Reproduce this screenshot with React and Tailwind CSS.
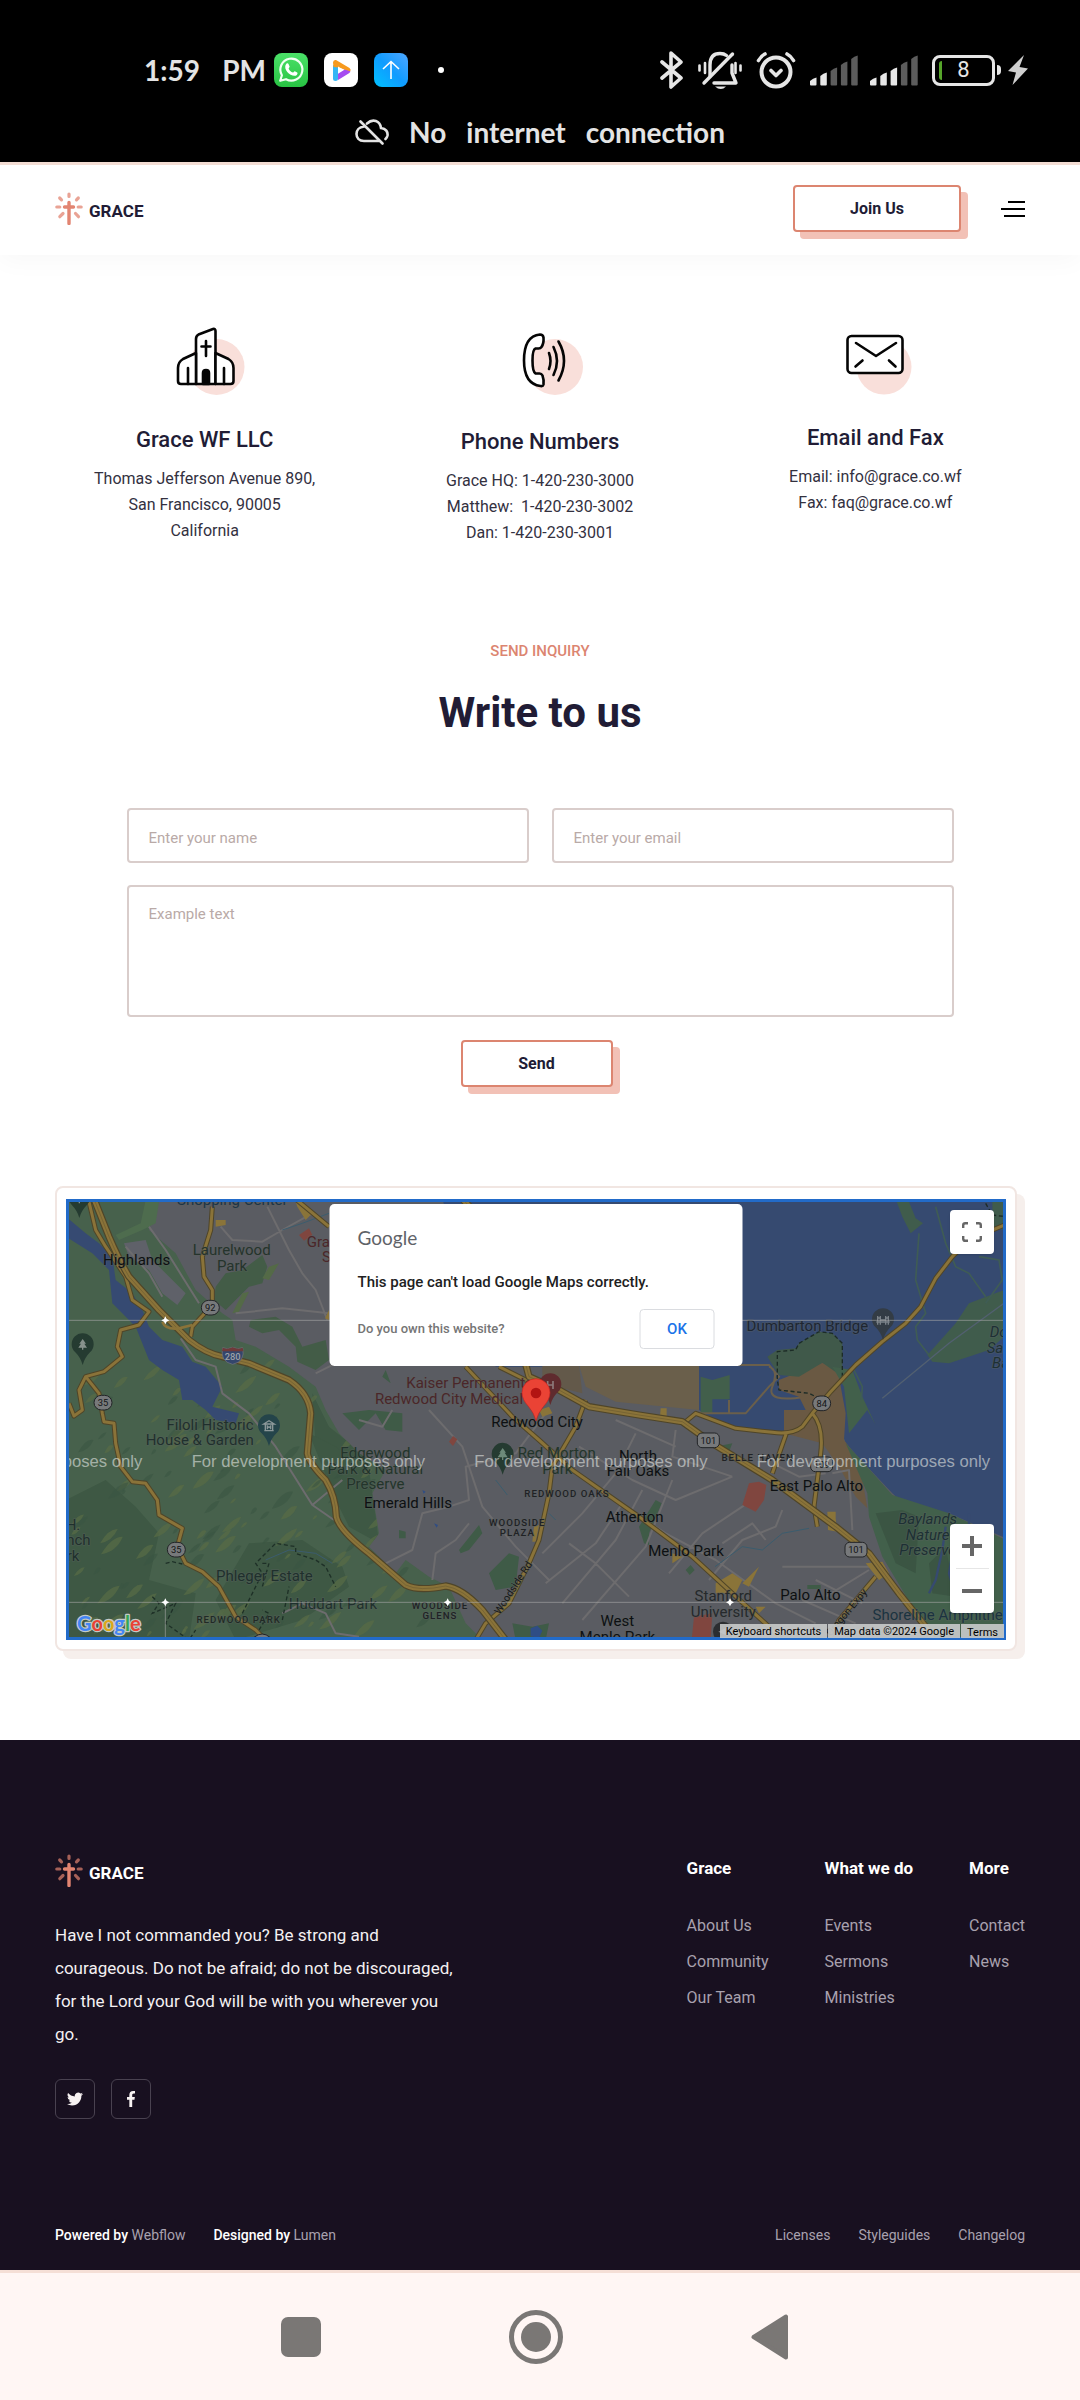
import React from "react";

const ROBOTO = "font-[Roboto,'Liberation_Sans',sans-serif]";

/* ---------- status bar ---------- */

function WhatsAppIcon() {
  return (
    <svg className="h-[34px] w-[34px]" viewBox="0 0 34 34" aria-label="WhatsApp">
      <defs>
        <linearGradient id="wa" x1="0" y1="0" x2="0" y2="1">
          <stop offset="0" stopColor="#4be168" />
          <stop offset="1" stopColor="#28c343" />
        </linearGradient>
      </defs>
      <rect width="34" height="34" rx="8" fill="url(#wa)" />
      <path d="M6.2 27.8l1.7-5.6A11 11 0 1 1 12 26.2z" fill="none" stroke="#f1fff3" strokeWidth="2.2" strokeLinejoin="round" />
      <path d="M12.6 10.6c.7-.5 1.5-.4 1.9.4l1.1 2.4c.2.5-.9 1.7-1 2 .8 2 2.300 3.400 4.300 4.200.4-.1 1.400-1.600 1.900-1.400l2.400 1.200c.6.4.3 1.800-.4 2.500-1.300 1.300-3.600 1.200-6.200-.2-2.500-1.400-4.600-3.800-5.200-6.300-.4-2 .1-3.800 1.200-4.800z" fill="#fff" />
    </svg>
  );
}

function PlayIcon() {
  return (
    <svg className="h-[34px] w-[34px]" viewBox="0 0 34 34" aria-label="Player">
      <rect width="34" height="34" rx="8" fill="#fff" />
      <path d="M9 12v13.500q0 2.500 2.500 2.500t2.500-2.500V14z" fill="#35b6f5" />
      <path d="M14 27.500V20l7-4 5 1.500q1 1.500-1 2.700L14 27z" fill="#a64cf0" />
      <path d="M9 9.500Q9.200 6.500 12 7l13.500 8q1.800 1.300.8 3.300L14 14.500 9.500 14z" fill="#f79a1e" />
      <path d="M14 13.500l6 3.600-6 3.600z" fill="#fff" />
    </svg>
  );
}

function UploadIcon() {
  return (
    <svg className="h-[34px] w-[34px]" viewBox="0 0 34 34" aria-label="Upload">
      <defs>
        <linearGradient id="up" x1="0" y1="1" x2="1" y2="0">
          <stop offset="0" stopColor="#00c2ff" />
          <stop offset=".5" stopColor="#109cff" />
          <stop offset="1" stopColor="#4fa6ff" />
        </linearGradient>
      </defs>
      <rect width="34" height="34" rx="8" fill="url(#up)" />
      <path d="M17 26V9M9 16l8-7.500 8 7.500" fill="none" stroke="#fff" strokeWidth="1.600" />
    </svg>
  );
}

function Signal({ strength }) {
  const tops = [22, 17, 12, 6, 0];
  return (
    <svg className="h-[31px] w-12" viewBox="0 0 48 31" aria-label={`Signal ${strength} of 5`}>
      {tops.map((t, i) => (
        <path
          key={t}
          d={`M${i * 10.300} ${t + 4}q3-3 6.500-3.500V29.500q0 1-1 1h-4.500q-1 0-1-1z`}
          fill={i < strength ? "#e6e6e6" : "#5c5c5c"}
        />
      ))}
    </svg>
  );
}

function StatusIcons() {
  return (
    <div className="flex items-center gap-3.5">
      <svg className="h-[38px] w-6" viewBox="0 0 24 38" fill="none" stroke="#e6e6e6" strokeWidth="3.600" strokeLinejoin="round" strokeLinecap="round" aria-label="Bluetooth">
        <path d="M2 11l19 16-10 9V2l10 9L2 27" />
      </svg>
      <svg className="h-[39px] w-11" viewBox="0 0 44 39" fill="none" stroke="#e6e6e6" strokeWidth="3.400" strokeLinecap="round" aria-label="Muted">
        <path d="M12 25V14C12 6 16 2.500 22 2.500c3 0 5 .8 6.500 2" />
        <path d="M34 14v8l4 10H16" strokeLinejoin="round" />
        <path d="M34.500 3L6 32" />
        <path d="M1.500 14.500v5M7 12v10M37.500 12v10M42.500 14.500v5" strokeWidth="2.600" />
        <path d="M17 35.500h11q-5 5-11 0z" fill="#e6e6e6" stroke="none" />
      </svg>
      <svg className="h-[38px] w-10" viewBox="0 0 40 38" fill="none" stroke="#e6e6e6" strokeWidth="4" strokeLinecap="round" strokeLinejoin="round" aria-label="Alarm">
        <circle cx="20" cy="21" r="14.500" />
        <path d="M2.500 9.500Q5 5 9 3M37.500 9.500Q35 5 31 3M15 19.500l5 5 5-5" strokeWidth="3.600" />
      </svg>
      <div className="flex gap-3">
        <Signal strength={2} />
        <Signal strength={3} />
      </div>
      <div className="flex items-center gap-[7px]">
        <div className="flex items-center gap-0.5" aria-label="Battery 8 percent">
          <div className="relative flex h-[31px] w-[63px] items-center justify-center rounded-lg border-[3px] border-[#e6e6e6]">
            <span className="absolute left-1 h-[19px] w-[3px] rounded-l bg-[#56a52a]" />
            <span className={`${ROBOTO} text-[22px] leading-6 text-[#e6e6e6]`}>8</span>
          </div>
          <span className="h-2.5 w-1 rounded-r bg-[#e6e6e6]" />
        </div>
        <svg className="h-[30px] w-5" viewBox="0 0 20 30" aria-label="Charging">
          <path d="M16 0L0 16l8 1.500L4.500 30 20 13.500l-8.500-1.500z" fill="#cfcfcf" />
        </svg>
      </div>
    </div>
  );
}

function StatusBar() {
  return (
    <div className="bg-black pt-[50px] pb-3 font-[Lato,sans-serif] text-[#e4e4e4]">
      <div className="flex h-10 items-center justify-between pr-[52px] pl-36">
        <div className="flex items-center gap-4">
          <div className="-mr-2 flex w-[122px] justify-between text-[28px] leading-10 font-bold">
            <span>1:59</span>
            <span>PM</span>
          </div>
          <WhatsAppIcon />
          <PlayIcon />
          <UploadIcon />
          <span className="ml-3.5 h-1.5 w-1.5 rounded-full bg-white" />
        </div>
        <StatusIcons />
      </div>
      <div className="mt-6 flex h-9 items-center justify-center gap-5 text-[28px] leading-9 font-bold">
        <svg className="h-[26px] w-[34px]" viewBox="0 0 34 26" fill="none" stroke="#e4e4e4" strokeWidth="2.600" strokeLinecap="round" aria-hidden="true">
          <path d="M9 7.500C4 8 1.500 11.500 1.500 15S4 22 9 22h15M12 4.500C18-1 25 2 26 9c5 .5 7 4 6.500 7.500q-.4 2-2 3.500M5.500 2.500l22 22" />
        </svg>
        <span>No</span>
        <span>internet</span>
        <span>connection</span>
      </div>
    </div>
  );
}

/* ---------- site header ---------- */

function Logo({ textClass, rayOpacity }) {
  return (
    <a href="#home" className="flex items-center gap-1.5" aria-label="Grace home">
      <svg className="h-[33px] w-7" viewBox="0 0 28 33" fill="none" stroke="#e28471" strokeLinecap="round">
        <path d="M14 10.500V31.500M9.500 15h9" strokeWidth="3.400" />
        <path
          d="M14 2v2.500M4.700 6l1.800 1.800M23.300 6l-1.800 1.800M1.800 15h3M23.200 15h3M8 21.500l-3.200 3.200M20.500 21.500l3 3.200"
          strokeWidth="3.200"
          opacity={rayOpacity}
        />
      </svg>
      <span className={`mt-1 text-[17px] leading-5 font-bold ${textClass}`}>GRACE</span>
    </a>
  );
}

function Header() {
  return (
    <header className="border-t-[3px] border-[#f3ddd4] bg-white shadow-[0_6px_24px_rgba(40,20,20,0.03)]">
      <div className="flex items-center justify-between px-[55px] pt-5 pb-[23px]">
        <Logo textClass="text-[#211c35]" rayOpacity="0.75" />
        <div className="flex items-center gap-10">
          <a
            href="#join"
            className="flex h-[47px] w-[168px] items-center justify-center rounded border-2 border-[#dc8570] bg-white text-base font-bold text-[#211c35] shadow-[7px_7px_0_#f2c1b6]"
          >
            Join Us
          </a>
          <button type="button" aria-label="Menu" className="flex h-[47px] w-6 flex-col items-end justify-center gap-[5px]">
            <span className="h-0.5 w-[17px] bg-black" />
            <span className="h-0.5 w-6 bg-black" />
            <span className="h-0.5 w-[21px] bg-black" />
          </button>
        </div>
      </div>
    </header>
  );
}

/* ---------- contact cards ---------- */

function ChurchIcon() {
  return (
    <svg className="h-[72px] w-[100px]" viewBox="0 0 100 72" fill="none" stroke="#050505" strokeWidth="2.600" strokeLinecap="round" strokeLinejoin="round">
      <circle cx="61.500" cy="42" r="28" fill="#f9dfda" stroke="none" />
      <path d="M41 59V14q0-3 2.500-4.500L58 4q2.500-.5 2.500 2V59z" fill="#fff" />
      <path d="M41 28l-13 6q-5 3-5 9V56q0 3 3 3h15zM60.500 28l13 6q5 3 5 9V56q0 3-3 3h-15z" fill="#fff" />
      <path d="M51 16v15M46.500 21.500h9M33 43v16M69 43v16" />
      <path d="M48 59V48q0-3 3-3t3 3v11z" fill="#050505" />
    </svg>
  );
}

function PhoneIcon() {
  return (
    <svg className="h-[74px] w-[100px]" viewBox="0 0 100 74" fill="none" stroke="#050505" strokeWidth="2.600" strokeLinecap="round" strokeLinejoin="round">
      <circle cx="65" cy="42" r="28" fill="#f9dfda" stroke="none" />
      <path
        d="M50 9.500q3 0 3.500 3 .5 6-2 9.500-1 1.500-3 1.500h-3q-3 1-3 12t3 13h4q2 0 3 2 1.500 4 1 9-.5 2-3 1.500Q34 59 34 35.500 34 11 50 9.500z"
        fill="#fff"
      />
      <path d="M59 28q3 8 0 16M63.500 22q7 14 0 28M68.500 16.500q11 19 0 39" />
    </svg>
  );
}

function MailIcon() {
  return (
    <svg className="h-[70px] w-[100px]" viewBox="0 0 100 70" fill="none" stroke="#050505" strokeWidth="2.600" strokeLinecap="round" strokeLinejoin="round">
      <circle cx="59" cy="42" r="27.500" fill="#f9dfda" stroke="none" />
      <rect x="22.500" y="11" width="55" height="37" rx="4" fill="#fff" />
      <path d="M31 18l20 13 20-13M37.500 35.500l-7 6M64 35.500l6.500 6" />
    </svg>
  );
}

const contacts = [
  { title: "Grace WF LLC", Icon: ChurchIcon, lines: ["Thomas Jefferson Avenue 890,", "San Francisco, 90005", "California"] },
  { title: "Phone Numbers", Icon: PhoneIcon, lines: ["Grace HQ: 1-420-230-3000", "Matthew:\u00a0 1-420-230-3002", "Dan: 1-420-230-3001"] },
  { title: "Email and Fax", Icon: MailIcon, lines: ["Email: info@grace.co.wf", "Fax: faq@grace.co.wf"] },
];

function Contacts() {
  return (
    <section className="grid grid-cols-3 gap-9 px-[55px] pt-[70px]">
      {contacts.map(({ title, Icon, lines }) => (
        <div key={title} className="flex flex-col items-center text-center">
          <Icon />
          <h3 className="mt-[29px] text-[22px] leading-7 font-medium text-[#211c35]">{title}</h3>
          <p className="mt-3 text-base leading-[26px] text-[#33313f]">
            {lines.map((l) => (
              <span key={l} className="block">{l}</span>
            ))}
          </p>
        </div>
      ))}
    </section>
  );
}

/* ---------- inquiry form ---------- */

const fieldClass =
  "block w-full rounded border-2 border-[#d9cdcb] bg-white px-5 text-[15px] leading-6 text-[#211c35] placeholder:text-[#b9aaa7] outline-none";

function Inquiry() {
  return (
    <section className="px-[55px] pt-[95px] text-center">
      <p className="text-[15px] leading-5 font-medium text-[#dc8570]">SEND INQUIRY</p>
      <h2 className="mt-7 text-[42px] leading-[48px] font-bold text-[#211c35]">Write to us</h2>
      <form className="mx-auto mt-[71px] max-w-[827px]" onSubmit={(e) => e.preventDefault()}>
        <div className="grid grid-cols-2 gap-[23px]">
          <input className={`${fieldClass} h-[55px] pt-1`} aria-label="Name" placeholder="Enter your name" />
          <input type="email" className={`${fieldClass} h-[55px] pt-1`} aria-label="Email" placeholder="Enter your email" />
        </div>
        <textarea className={`${fieldClass} mt-[22px] h-[132px] resize-none pt-[15px]`} aria-label="Message" placeholder="Example text" />
        <button
          type="submit"
          className="mt-[23px] mr-[7px] h-[47px] w-[152px] rounded border-2 border-[#dc8570] bg-white text-base font-bold text-[#211c35] shadow-[7px_7px_0_#f2c1b6]"
        >
          Send
        </button>
      </form>
    </section>
  );
}

/* ---------- map ---------- */

const GREEN =
  "M51 57H330L300 150 380 220 440 330 520 400 550 420 560 480 620 500 720 560 800 620 830 690 870 760 930 820 1010 870 970 940 990 1060 960 1100 1040 1180 1070 1140 1140 1190 1200 1220 1250 1330 1300 1380H51z";

const hash = (n) => {
  const v = Math.sin(n * 127.1) * 43758.5453;
  return v - Math.floor(v);
};

const streaks = Array.from({ length: 170 }, (_, i) => {
  const x = 60 + hash(i + 1) * 1050;
  const y = 560 + hash(i + 301) * 820;
  const l = 14 + hash(i + 601) * 55;
  const w = 5 + hash(i + 901) * 13;
  const light = hash(i + 1201) > 0.45;
  return { x, y, l, w, light };
});

const majorRoads = [
  "M135 57L180 170Q210 240 240 290L330 390 420 480Q470 520 520 530L600 550 720 600Q780 640 785 700L775 820Q780 850 830 900 860 950 862 1010 870 1050 960 1120L1070 1215Q1110 1235 1190 1218 1240 1225 1300 1290L1370 1380",
  "M1240 57L1320 140 1440 590 1530 630 1620 680 1770 705 1900 725 1990 790 2170 900 2360 1040 2460 1120 2550 1240 2630 1340 2650 1380",
];
const midRoads = [
  "M490 80L485 150 460 230 465 290 490 330V375L430 440 425 470",
  "M118 57L140 150 170 200 230 290 250 360 300 395 270 435 215 450 205 500 220 530 165 575 110 590 90 630 100 690 75 708 60 670",
  "M110 590L150 640 160 700 165 725 195 730 200 790 215 860 250 905 290 910 325 960 330 1005 400 1045 385 1100 410 1150 460 1175 510 1220 560 1310 620 1350 650 1380",
  "M1250 560L1390 710 1470 780 1570 870 1770 1010 1930 1130 2050 1240 2160 1340 2200 1380",
  "M1350 560L1470 620M1610 660L1580 740 1510 860 1500 940 1470 1080 1440 1150 1380 1270 1310 1330 1280 1380",
  "M740 57L840 140",
  "M2871 133L2760 180 2710 230 2660 295 2615 380 2570 430 2500 485 2420 555 2345 635 2290 700 2260 740Q2230 765 2170 757L2060 745 1940 700 1910 725",
  "M2290 700Q2325 740 2315 820L2295 980 2305 1040M2212 760L2170 880M2480 1190L2370 1320 2340 1380",
];
const streets =
  "M655 80L720 210 760 280 800 330 835 420M515 140L550 180 640 185 700 150 790 100M300 140L350 210 400 290 450 370M560 400L700 385 840 400M230 200L300 280 340 350M395 475L440 540 500 560 520 640 600 700 680 800 790 975 855 1020M790 975L880 900M800 580L900 530M1140 690L1240 800 1300 980 1400 1100 1500 1200M1010 1150L1090 1110 1120 1000 1200 980 1260 960 1250 860 1400 820 1490 700M930 720L1000 740 1030 690M1480 1120L1600 1000 1700 880 1760 760M1490 1210L1640 1090 1720 970M1540 1270L1700 1080 1780 930M1600 1320L1790 1100 1870 900M1560 1090L1640 1150 1740 1250M1650 930L1850 1060 2000 1140 2180 1270 2300 1330M1590 800L1750 900 1880 960 2050 890M1860 1180L1960 1060 2080 980 2140 930M1980 1200L2080 1080 2180 1040 2200 990M2200 1160H2460M2330 1250L2460 1170M2300 1200L2440 1270M2020 1090L2110 1030 2150 1080M2350 880L2400 870 2410 1050M2260 1260L2420 1330M1880 750L1870 830 2050 890M2190 860L2250 890 2330 880M1700 720L1880 800M700 1300L760 1270 830 1300 860 1360 930 1370 M1150 1200L1160 1120 1220 1080 1260 1030";

const labels = [
  ["Highlands", 263, 255, 45, "#0d1012"],
  ["Laurelwood", 548, 225, 45, "#25342c"],
  ["Park", 549, 272, 45, "#25342c"],
  ["Shopping Center", 550, 75, 45, "#1d3546"],
  ["Gra", 808, 200, 45, "#4b2629"],
  ["S", 832, 246, 45, "#4b2629"],
  ["Kaiser Permanente", 1262, 624, 45, "#4b2629"],
  ["Redwood City Medical", 1200, 671, 45, "#4b2629"],
  ["Redwood City", 1464, 741, 45, "#0d1012"],
  ["Dumbarton Bridge", 2275, 453, 45, "#1d2632"],
  ["Filoli Historic", 483, 749, 45, "#1f302d"],
  ["House & Garden", 452, 795, 45, "#1f302d"],
  ["Edgewood", 979, 834, 45, "#23352b"],
  ["Park & Natural", 979, 881, 45, "#23352b"],
  ["Preserve", 979, 927, 45, "#23352b"],
  ["Emerald Hills", 1077, 985, 45, "#0d1012"],
  ["Red Morton", 1523, 834, 45, "#23352b"],
  ["Park", 1525, 881, 45, "#23352b"],
  ["North", 1767, 843, 45, "#0d1012"],
  ["Fair Oaks", 1767, 889, 45, "#0d1012"],
  ["REDWOOD OAKS", 1554, 951, 29, "#202225", 3],
  ["WOODSIDE", 1405, 1038, 29, "#202225", 3],
  ["PLAZA", 1405, 1068, 29, "#202225", 3],
  ["BELLE HAVEN", 2126, 842, 29, "#202225", 3],
  ["East Palo Alto", 2302, 932, 45, "#0d1012"],
  ["Atherton", 1757, 1025, 45, "#0d1012"],
  ["Menlo Park", 1911, 1127, 45, "#0d1012"],
  ["Palo Alto", 2284, 1261, 45, "#0d1012"],
  ["Stanford", 2023, 1264, 45, "#25292c"],
  ["University", 2023, 1311, 45, "#25292c"],
  ["West", 1705, 1337, 45, "#0d1012"],
  ["Menlo Park", 1705, 1385, 45, "#0d1012"],
  ["Phleger Estate", 646, 1203, 45, "#1f302d"],
  ["Huddart Park", 852, 1288, 45, "#1f302d"],
  ["REDWOOD PARK", 569, 1328, 29, "#202a25", 3],
  ["WOODSIDE", 1173, 1288, 29, "#202225", 3],
  ["GLENS", 1173, 1318, 29, "#202225", 3],
  ["H.", 72, 1050, 45, "#1f302d"],
  ["nch", 88, 1096, 45, "#1f302d"],
  ["rk", 72, 1142, 45, "#1f302d"],
  ["Shoreline Amphitheatre", 2705, 1319, 45, "#1a3340"],
];

const italics = [
  ["Don Edwards", 2950, 472],
  ["San Francisco", 2950, 518],
  ["Bay", 2865, 564],
  ["Baylands", 2636, 1033],
  ["Nature", 2636, 1080],
  ["Preserve", 2636, 1126],
];

function Pin({ x, y, fill, children }) {
  return (
    <g transform={`translate(${x} ${y})`}>
      <path d="M0 60Q-6 38-22 22A33 33 0 1 1 22 22Q6 38 0 60z" fill={fill} />
      {children}
    </g>
  );
}

function Shield({ x, y, n, wide }) {
  return (
    <g>
      <rect x={x - (wide ? 33 : 27)} y={y - 22} width={wide ? 66 : 54} height="44" rx={wide ? 14 : 22} fill="#77797b" stroke="#222427" strokeWidth="3" />
      <text x={x} y={y + 10} fontSize="28" textAnchor="middle" fill="#121416">{n}</text>
    </g>
  );
}

function MapDrawing() {
  return (
    <svg
      className="absolute inset-0 h-full w-full"
      viewBox="51 57 2820 1323"
      preserveAspectRatio="xMidYMid slice"
      fontFamily="Roboto, 'Liberation Sans', sans-serif"
      role="img"
      aria-label="Map of Redwood City"
    >
      <defs>
        <clipPath id="hills">
          <path d={GREEN} />
        </clipPath>
      </defs>
      <rect x="51" y="57" width="2820" height="1323" fill="#5a5c62" />
      <path d={GREEN} fill="#47614c" />
      <g clipPath="url(#hills)">
        <path d="M51 960L170 900 260 980 330 1060 300 1200 440 1240 420 1380H51zM790 640L840 740 940 820 960 930 1000 900 900 1000 840 900 800 800zM600 1090L760 1080 880 1160 900 1220 760 1320 560 1380 500 1260z" fill="#3e5844" />
        <path d="M780 760L860 800 960 870 980 1010 990 1090 900 1040 860 960z" fill="#3e5844" />
        {streaks.map((s, i) => (
          <path
            key={i}
            d={`M${s.x} ${s.y}q${s.l * 0.5} ${-s.l * 0.6 - s.w} ${s.l} ${-s.l * 0.8}q${-s.l * 0.3} ${s.l * 0.7} ${-s.l} ${s.l * 0.8}z`}
            fill={s.light ? "#576b45" : "#3b5542"}
            opacity={s.light ? 0.75 : 0.6}
          />
        ))}
      </g>
      <path d="M225 190L290 180 310 240 410 340 385 375 340 340 300 270 240 230z" fill="#5f6169" />
      <path d="M290 60L330 65 320 130 280 150 210 180 200 165 275 130z" fill="#4e6c4e" />
      <path d="M530 280L580 270 640 225 655 260 640 310 600 320 560 360 530 390 495 360 500 320zM605 420L680 410 730 440 760 500 830 480 840 540 800 570 745 545 740 500 690 450 640 460 600 440z" fill="#435c47" />
      <path d="M580 340L600 335 570 395 550 400zM660 260L690 250 660 300 640 295z" fill="#546a47" />
      <path d="M880 700L960 690 1060 700 1060 755 1010 750 980 700 930 750zM1230 1110L1290 1035 1300 1060 1260 1110 1235 1120zM1320 1180L1380 1120 1410 1130 1400 1220 1340 1230zM1770 1040L1820 960 1838 970 1800 1060 1800 1095 1785 1090zM2000 800L2050 790 2040 815zM1910 1170L1925 1155 1937 1170 1922 1185zM2275 1215h40v12h-40zM1000 590L1010 570 1025 610zM1050 1050l20 5v20h-20zM1390 1330L1450 1340 1500 1330 1490 1380H1400z" fill="#3f5b47" />

      {/* reservoir */}
      <path d="M51 110L110 160 150 190 190 230 200 300 250 340 280 390 300 440 340 480 400 500 430 545 470 560 520 620 490 680 570 700 560 730 500 720 470 690 430 660 400 660 390 600 340 570 300 540 260 440 190 370 180 270 130 220 51 170z" fill="#364a72" />
      <path d="M1445 1345l20-8 15 15-10 22-25-5zM1155 1030l12 5-4 8zM1120 930l10 5-6 6z" fill="#2f4d85" />

      {/* bay */}
      <path d="M1180 57H2871V1075L2700 1000 2580 985 2530 940 2445 850 2390 790 2380 760 2220 755 2040 745 1950 690V560H1340z" fill="#364a70" />
      <path d="M1590 555H1950V690L1700 665 1610 620z" fill="#6a5f4b" />
      <path d="M1480 555H1590L1600 640 1480 610z" fill="#63594a" />
      <path d="M1955 590L1990 600 2042 585V658H1990V700H1955z" fill="#425f4b" />
      <path d="M1955 555H2160L2190 590 2160 620 2090 700H1950M1990 700H2040V660M2160 560Q2190 570 2170 620T2270 650" fill="none" stroke="#6a5f4b" strokeWidth="6" />
      <path d="M2190 600L2320 548 2365 565 2390 700 2385 780 2430 840 2455 985 2420 950 2370 860 2320 790 2205 760V690H2270L2250 650 2190 630z" fill="#6a5943" />
      <path d="M2155 530L2185 510 2240 505 2250 490 2310 455 2350 460 2380 490V590L2320 548 2250 590 2190 585z" fill="#40594a" />
      <path d="M2350 560L2410 570 2440 650 2480 735 2455 690 2400 760 2385 620zM2390 790L2445 850 2530 945 2700 1000 2871 1080V1380H2650L2500 1130 2460 1010 2455 940z" fill="#42604b" />
      <path d="M2480 1000L2560 990 2610 1010 2600 1180 2540 1150zM2640 1150L2690 1100 2720 1250 2650 1240z" fill="#3b5543" />
      <path d="M2690 1040L2680 1110 2660 1200 2640 1240M2720 1060L2700 1180 2720 1250M2760 1000V1200" fill="none" stroke="#364a70" strokeWidth="7" />
      <path d="M2635 525L2720 430 2760 370 2865 330V470L2820 510 2700 550 2650 545zM2540 57L2580 65 2600 115 2622 130 2585 160 2560 110zM2830 62h41v90l-40-12z" fill="#405c4c" />
      <path d="M2610 160L2600 300 2630 400 2600 440 2605 480 2640 525M2660 80L2690 190 2720 260 2760 280 2810 350M2790 230L2850 240 2860 300 2810 370M2415 570L2440 620 2437 660" fill="none" stroke="#3f5c55" strokeWidth="5" />
      <path d="M2380 590V490L2350 460 2310 455 2250 490 2240 510 2185 515V600L2190 630 2280 640 2320 660M2810 70L2830 105 2871 110" fill="none" stroke="#1c2b26" strokeWidth="4" strokeDasharray="12 8" />

      <path d={streets} fill="none" stroke="#6d6c6e" strokeWidth="6" strokeLinejoin="round" />
      <path d="M2500 655L2700 490 2865 370" fill="none" stroke="#526070" strokeWidth="4" />
      <path d="M1998 1160L2080 1100 2140 1110 2200 1060 2280 1045M650 1140L720 1110 800 1120 850 1150M700 150L760 130 840 100M1340 900L1375 945M1500 1000L1520 1020" fill="none" stroke="#3b5c6e" strokeWidth="3" />
      <path d="M580 1300L640 1180 620 1150 680 1090 740 1100 740 1120 800 1140 830 1160 860 1220M630 1350L660 1300 640 1290M640 1150L660 1150 640 1220M700 1320L720 1220M310 1250L330 1270 310 1300 380 1270 350 1330 420 1380 440 1350M350 1150L370 1145 400 1152" fill="none" stroke="#1e3027" strokeWidth="4" strokeDasharray="12 8" />

      {/* campuses and commercial blocks */}
      <path d="M750 165L780 145 790 165 765 182zM2100 910L2130 905 2152 915 2145 960 2120 995 2080 975zM1935 1310L1990 1300 1985 1380H1928zM1200 785L1212 768 1225 778 1212 798z" fill="#80463f" />
      <path d="M500 120h30v15l-30 5zM740 65L790 100 770 120 745 80zM1470 690L1500 680 1510 700 1480 710zM1835 685h18v25h-20zM2000 1210L2050 1180 2080 1200 2060 1240 2000 1240zM2080 1210L2130 1160 2100 1220zM2335 995h25v20l5 40-28-5zM2450 1150L2500 1145 2520 1180 2490 1200zM1455 1040l15-5-10 50h-10zM1870 1120l30 10-30 20zM2120 1280h30l-20 20zM840 390v30l-12-5z" fill="#8a7439" />

      <path d={midRoads.join("")} fill="none" stroke="#4f4528" strokeWidth="15" strokeLinejoin="round" />
      <path d={midRoads.join("")} fill="none" stroke="#8a7339" strokeWidth="9" strokeLinejoin="round" />
      <path d={majorRoads.join("")} fill="none" stroke="#4f4528" strokeWidth="22" strokeLinejoin="round" />
      <path d={majorRoads.join("")} fill="none" stroke="#8a7339" strokeWidth="15" strokeLinejoin="round" />
      <path d={majorRoads.join("")} fill="none" stroke="#6d5c31" strokeWidth="2" strokeLinejoin="round" />
      <path d="M340 425Q350 450 390 445L430 435" fill="none" stroke="#8a7339" strokeWidth="8" />

      <Pin x={101} y={495} fill="#253b31">
        <path d="M0-18l10 14H5l8 12H-13l8-12h-5zM-2 8h4v6h-4z" fill="#87918c" />
      </Pin>
      <Pin x={91} y={54} fill="#253b31">
        <path d="M-12 2h24M0-8v24" stroke="#87918c" strokeWidth="4" />
      </Pin>
      <Pin x={660} y={738} fill="#24444a">
        <path d="M-16-6L0-16 16-6zM-14 14h28M-11-4v16M11-4v16M-5 10V0l5 5 5-5v10" fill="none" stroke="#8b9799" strokeWidth="4" />
      </Pin>
      <Pin x={1361} y={824} fill="#253b31">
        <path d="M0-20l10 14H6l9 14H-15l9-14h-4zM-2 8h4v8h-4z" fill="#6d8a7a" />
      </Pin>
      <Pin x={1504} y={615} fill="#5f2b2e">
        <path d="M-8-12v24M8-12v24M-8 0H8" stroke="#8d7a7b" strokeWidth="5" />
      </Pin>
      <Pin x={2502} y={420} fill="#333c45">
        <path d="M-16-12v26M-8-12v26M8-12v26M16-12v26M-20 6h40M-16-6h8M8-6h8M-8 0H8" fill="none" stroke="#7b8289" strokeWidth="4" />
      </Pin>
      <circle cx="2022" cy="1355" r="30" fill="#2b2d30" />
      <path d="M2008 1355l22-10v20z" fill="#85878a" />
      <path d="M615 1372q25-20 48 0v8h-48z" fill="#77797b" stroke="#222427" strokeWidth="3" />

      <g stroke="#5a605f" strokeOpacity=".45" strokeWidth="5" paintOrder="stroke" strokeLinejoin="round">
        {labels.map(([t, x, y, size, fill, track]) => (
          <text key={`${t}${x}${y}`} x={x} y={y} fontSize={size} fill={fill} textAnchor="middle" fontWeight={track ? 500 : 400} letterSpacing={track || 0}>
            {t}
          </text>
        ))}
        {italics.map(([t, x, y]) => (
          <text key={t} x={x} y={y} fontSize="45" fill="#1d3034" textAnchor="middle" fontStyle="italic">
            {t}
          </text>
        ))}
        <text transform="translate(1352 1305) rotate(-57)" fontSize="31" fill="#15171a">Woodside Rd</text>
        <text transform="translate(2345 1370) rotate(-50)" fontSize="31" fill="#15171a">Oregon Expy</text>
      </g>

      <Shield x={484} y={383} n="92" />
      <Shield x={162} y={668} n="35" />
      <Shield x={382} y={1109} n="35" />
      <Shield x={2318} y={670} n="84" />
      <Shield x={2318} y={853} n="109" wide />
      <Shield x={1978} y={781} n="101" wide />
      <Shield x={2421} y={1109} n="101" wide />
      <path d="M521 503Q535 510 551 502 567 510 581 503 590 545 551 553 512 545 521 503z" fill="#34466c" stroke="#77797f" strokeWidth="2" />
      <path d="M521 503Q535 510 551 502 567 510 581 503L583 514H519z" fill="#6f3a3a" />
      <text x="551" y="541" fontSize="28" fontWeight="500" textAnchor="middle" fill="#9da1a8">280</text>

      {/* tile edges and watermark */}
      <path d="M51 421H2871M51 1267H2871M349 1267V1380" stroke="#a8aaa8" strokeOpacity=".6" strokeWidth="3" />
      {[[349, 421], [349, 1267], [1196, 1267], [2043, 1267]].map(([x, y]) => (
        <path key={`${x}-${y}`} d={`M${x} ${y - 12}l4 8 8 4-8 4-4 8-4-8-8-4 8-4z`} fill="#fff" />
      ))}
      <g fontFamily="'Liberation Sans', Arial, sans-serif" fontSize="50" fill="#e4e7e4" fillOpacity=".6">
        {[-420, 428, 1276, 2123].map((x) => (
          <text key={x} x={x} y="862">For development purposes only</text>
        ))}
      </g>

      {/* location marker */}
      <path d="M1461 723Q1456 700 1438 679 1419 658 1419 638A42 42 0 0 1 1503 638Q1503 658 1484 679 1466 700 1461 723z" fill="#ea4335" stroke="#c5221f" strokeWidth="2" />
      <circle cx="1461" cy="639" r="16" fill="#b31412" />
    </svg>
  );
}

function MapCard() {
  return (
    <section className="px-[55px] pt-[99px] pb-[89px]">
      <div className="mr-2 rounded-lg border-2 border-[#f1e6e2] bg-white p-[9px] pt-[11px] shadow-[8px_8px_0_#f6efec]">
        <div className={`relative h-[441px] overflow-hidden ${ROBOTO}`}>
          <MapDrawing />
          <div className="pointer-events-none absolute inset-0 border-[3px] border-[#226bc9]" />

          <div className="absolute top-[5px] left-1/2 h-[162px] w-[413px] -translate-x-1/2 rounded-[5px] bg-white px-7 pt-5 pb-[17px]">
            <p className="font-[Lato,sans-serif] text-[19px] leading-7 text-[#5f6368]">Google</p>
            <p className="mt-[18px] text-[15px] leading-6 font-medium text-[#212121]">This page can't load Google Maps correctly.</p>
            <div className="mt-[15px] flex items-center justify-between">
              <a href="#own" className="text-[13px] leading-5 font-medium text-[#757575]">Do you own this website?</a>
              <button type="button" className="h-10 w-[75px] rounded border border-[#dadce0] text-[15px] font-medium text-[#1a73e8]">OK</button>
            </div>
          </div>

          <button type="button" aria-label="Toggle fullscreen view" className="absolute top-[11px] right-3 flex h-11 w-11 items-center justify-center rounded-sm bg-white shadow">
            <svg className="h-5 w-5" viewBox="0 0 20 20" fill="none" stroke="#666" strokeWidth="2.400">
              <path d="M1.200 6V3.200q0-2 2-2H6M14 1.200h2.800q2 0 2 2V6M18.800 14v2.800q0 2-2 2H14M6 18.800H3.200q-2 0-2-2V14" />
            </svg>
          </button>

          <div className="absolute right-3 bottom-[27px] flex w-11 flex-col items-center rounded-sm bg-white shadow">
            <button type="button" aria-label="Zoom in" className="flex h-11 w-11 items-center justify-center">
              <svg className="h-5 w-5" viewBox="0 0 20 20" stroke="#666" strokeWidth="4"><path d="M10 0v20M0 10h20" /></svg>
            </button>
            <span className="h-px w-[33px] bg-[#e6e6e6]" />
            <button type="button" aria-label="Zoom out" className="flex h-11 w-11 items-center justify-center">
              <svg className="h-5 w-5" viewBox="0 0 20 20" stroke="#666" strokeWidth="4"><path d="M0 10h20" /></svg>
            </button>
          </div>

          <svg className="absolute bottom-0.5 left-2.5 h-[26px] w-[68px]" viewBox="0 0 68 26" aria-label="Google">
            <text x="1" y="19" fontSize="20" fontWeight="700" fontFamily="Lato, sans-serif" stroke="#c4cac6" strokeWidth="2.500" paintOrder="stroke" strokeLinejoin="round">
              <tspan fill="#4285f4">G</tspan>
              <tspan fill="#e94335">o</tspan>
              <tspan fill="#dba81a">o</tspan>
              <tspan fill="#4285f4">g</tspan>
              <tspan fill="#34a853">l</tspan>
              <tspan fill="#e94335">e</tspan>
            </text>
          </svg>

          <div className="absolute right-0.5 bottom-0.5 flex h-3.5 gap-px text-[11px] leading-[15px] text-black">
            <button type="button" className="bg-[#c9cbcb]/90 px-1.5">Keyboard shortcuts</button>
            <span className="bg-[#c9cbcb]/90 px-1.5">Map data ©2024 Google</span>
            <a href="#terms" className="bg-[#c9cbcb]/90 px-1.5 leading-[17px]">Terms</a>
          </div>
        </div>
      </div>
    </section>
  );
}

/* ---------- footer ---------- */

const footerColumns = [
  ["Grace", ["About Us", "Community", "Our Team"]],
  ["What we do", ["Events", "Sermons", "Ministries"]],
  ["More", ["Contact", "News"]],
];

function Footer() {
  return (
    <footer className="bg-[#181020] px-[55px] pt-[114px] pb-[25px] text-white">
      <div className="flex justify-between">
        <div>
          <Logo textClass="text-white" rayOpacity="0.7" />
          <p className="mt-8 max-w-[408px] text-[17px] leading-[33px] text-[#f4f0f2]">
            Have I not commanded you? Be strong and courageous. Do not be afraid; do not be discouraged, for the Lord your God will be with you wherever you go.
          </p>
          <div className="mt-7 flex gap-4">
            <a href="#twitter" aria-label="Twitter" className="flex h-10 w-10 items-center justify-center rounded-md border border-[#494250]">
              <svg className="h-4 w-4" viewBox="0 0 24 24" fill="#f7f2f2">
                <path d="M23.950 4.570a10 10 0 0 1-2.820.770 4.960 4.960 0 0 0 2.160-2.720c-.950.560-2 .970-3.130 1.190a4.920 4.920 0 0 0-8.380 4.480C7.690 8.090 4.070 6.130 1.640 3.160a4.920 4.920 0 0 0 1.520 6.570 4.900 4.900 0 0 1-2.230-.610v.060a4.920 4.920 0 0 0 3.950 4.830 5 5 0 0 1-2.210.080 4.940 4.940 0 0 0 4.600 3.420A9.870 9.870 0 0 1 0 19.540a13.990 13.990 0 0 0 7.550 2.210c9.050 0 14-7.500 14-13.990 0-.210 0-.420-.020-.630a9.940 9.940 0 0 0 2.460-2.550z" />
              </svg>
            </a>
            <a href="#facebook" aria-label="Facebook" className="flex h-10 w-10 items-center justify-center rounded-md border border-[#494250]">
              <svg className="h-4 w-4" viewBox="0 0 24 24" fill="#f7f2f2">
                <path d="M9.500 24V13.200H6V9h3.500V6c0-3.800 2.200-6 5.600-6 1.600 0 2.900.1 2.900.1v3.700h-1.800c-1.800 0-2.400 1.100-2.400 2.300V9h4l-.6 4.200h-3.400V24z" />
              </svg>
            </a>
          </div>
        </div>
        <nav className="flex gap-14 pt-0.5" aria-label="Footer">
          {footerColumns.map(([title, links]) => (
            <div key={title}>
              <h4 className="text-[17px] leading-6 font-bold">{title}</h4>
              <ul className="mt-[34px] flex flex-col gap-3 text-base leading-6 text-[#a8a1ae]">
                {links.map((l) => (
                  <li key={l}>
                    <a href={`#${l}`}>{l}</a>
                  </li>
                ))}
              </ul>
            </div>
          ))}
        </nav>
      </div>
      <div className="mt-[106px] flex justify-between text-sm leading-5 text-[#a8a1ae]">
        <div className="flex gap-7">
          <p>
            <span className="font-medium text-white">Powered by</span> <a href="#webflow">Webflow</a>
          </p>
          <p>
            <span className="font-medium text-white">Designed by</span> <a href="#lumen">Lumen</a>
          </p>
        </div>
        <div className="flex gap-7">
          <a href="#licenses">Licenses</a>
          <a href="#styleguides">Styleguides</a>
          <a href="#changelog">Changelog</a>
        </div>
      </div>
    </footer>
  );
}

/* ---------- system navigation ---------- */

function SystemNav() {
  return (
    <div className="flex h-[130px] items-center justify-center border-t-[3px] border-[#f5dfd6] bg-[#fff6f4] pr-2.5">
      <div className="flex items-center gap-[188px]">
        <button type="button" aria-label="Recent apps" className="h-10 w-10 rounded-[7px] bg-[#7a7775]" />
        <button type="button" aria-label="Home" className="flex h-[54px] w-[54px] items-center justify-center rounded-full border-[5px] border-[#7a7775]">
          <span className="h-[30px] w-[30px] rounded-full bg-[#7a7775]" />
        </button>
        <button type="button" aria-label="Back" className="h-[46px] w-[38px]">
          <svg className="h-full w-full" viewBox="0 0 38 46">
            <path d="M35 2.500V43.500L2.500 23z" fill="#7a7775" stroke="#7a7775" strokeWidth="4" strokeLinejoin="round" />
          </svg>
        </button>
      </div>
    </div>
  );
}

export default function App() {
  return (
    <div className={`min-h-screen bg-white ${ROBOTO}`}>
      <StatusBar />
      <Header />
      <main>
        <Contacts />
        <Inquiry />
        <MapCard />
      </main>
      <Footer />
      <SystemNav />
    </div>
  );
}
